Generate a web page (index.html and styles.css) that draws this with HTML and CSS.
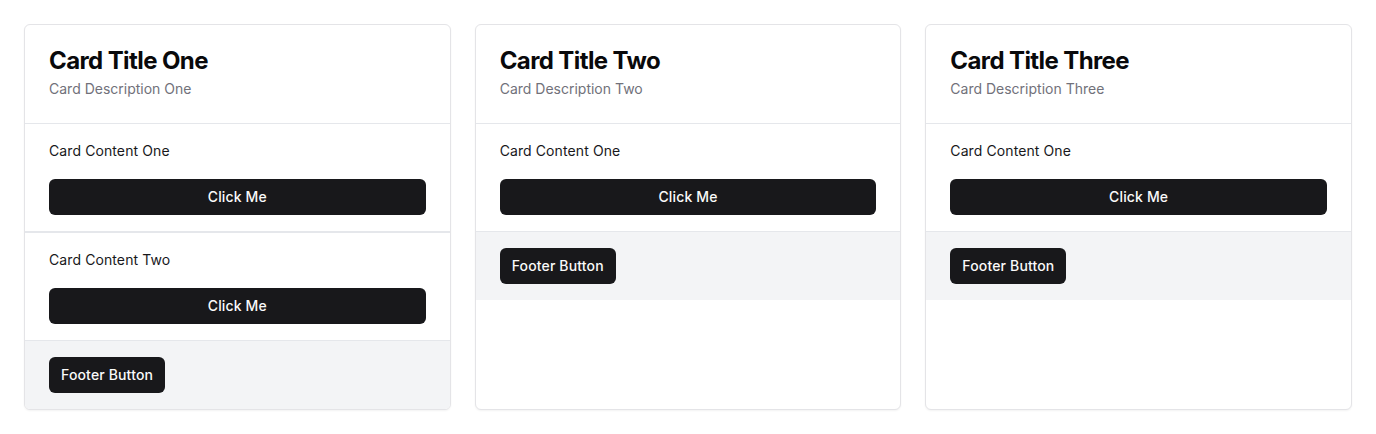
FILE: index.html
```html
<!DOCTYPE html>
<html>
<head>
<meta charset="utf-8">
<link rel="stylesheet" href="styles.css">
</head>
<body>
<div class="grid">
  <div class="card">
    <div class="card-header">
      <h3 class="card-title">Card Title One</h3>
      <p class="card-desc">Card Description One</p>
    </div>
    <div class="card-content">
      <p class="content-text">Card Content One</p>
      <button class="btn btn-full">Click Me</button>
    </div>
    <div class="card-content">
      <p class="content-text">Card Content Two</p>
      <button class="btn btn-full">Click Me</button>
    </div>
    <div class="card-footer">
      <button class="btn">Footer Button</button>
    </div>
  </div>
  <div class="card">
    <div class="card-header">
      <h3 class="card-title">Card Title Two</h3>
      <p class="card-desc">Card Description Two</p>
    </div>
    <div class="card-content">
      <p class="content-text">Card Content One</p>
      <button class="btn btn-full">Click Me</button>
    </div>
    <div class="card-footer">
      <button class="btn">Footer Button</button>
    </div>
  </div>
  <div class="card">
    <div class="card-header">
      <h3 class="card-title">Card Title Three</h3>
      <p class="card-desc">Card Description Three</p>
    </div>
    <div class="card-content">
      <p class="content-text">Card Content One</p>
      <button class="btn btn-full">Click Me</button>
    </div>
    <div class="card-footer">
      <button class="btn">Footer Button</button>
    </div>
  </div>
</div>
</body>
</html>
```
FILE: styles.css
```css
* { box-sizing: border-box; }
html, body { margin: 0; background: #ffffff; }
body {
  padding: 24px;
  font-family: Inter, "Noto Sans", sans-serif;
  color: #09090b;
}
.grid {
  display: grid;
  grid-template-columns: repeat(3, 1fr);
  gap: 24px;
}
.card {
  border: 1px solid #e4e4e7;
  border-radius: 6px;
  background: #fff;
  overflow: hidden;
  box-shadow: 0 1px 2px rgba(0,0,0,0.05);
  display: flex;
  flex-direction: column;
}
.card-header {
  padding: 24px;
  display: flex;
  flex-direction: column;
  gap: 6px;
  border-bottom: 1px solid #e5e7eb;
}
.card-title {
  margin: 0;
  font-size: 24px;
  line-height: 24px;
  font-weight: 650;
  letter-spacing: -0.6px;
  color: #09090b;
}
.card-desc {
  margin: 0;
  font-size: 14px;
  line-height: 20px;
  color: #71717a;
}
.card-content {
  padding: 17px 24px 16px;
  border-bottom: 1px solid #e5e7eb;
}
.card-content + .card-content {
  border-top: 1px solid #e5e7eb;
}
.content-text {
  margin: 0 0 18px;
  font-size: 14px;
  line-height: 20px;
  letter-spacing: 0.1px;
  color: #18181b;
}
.btn {
  height: 36px;
  padding: 0 12px 1px;
  border: none;
  border-radius: 6px;
  background: #18181b;
  color: #fafafa;
  font-family: Inter, "Noto Sans", sans-serif;
  font-size: 14px;
  font-weight: 500;
  letter-spacing: 0.15px;
  display: inline-flex;
  align-items: center;
  justify-content: center;
}
.btn-full {
  width: 100%;
  display: flex;
}
.card-footer {
  padding: 16px 24px;
  background: #f3f4f6;
}
```
